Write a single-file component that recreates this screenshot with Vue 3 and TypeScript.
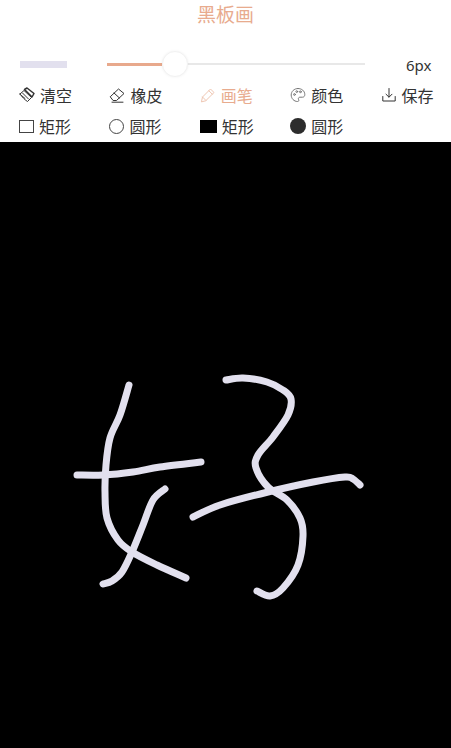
<script setup lang="ts">
type Pt = [number, number]
const lines: Pt[][] = [
  [[129, 385], [120, 415], [110, 438], [106, 465], [105, 492], [107, 518], [118, 540], [132, 552], [157, 565], [186, 578]],
  [[77, 475], [103, 475], [133, 472], [160, 467], [201, 462]],
  [[165, 489], [153, 500], [143, 525], [132, 552], [122, 572], [112, 581], [103, 584]],
  [[226, 380], [243, 378], [267, 382], [283, 390], [291, 399], [288, 415], [273, 437], [258, 455], [256, 468], [268, 487], [287, 500], [300, 518], [303, 536], [298, 565], [283, 588], [270, 596], [257, 591]],
  [[193, 517], [220, 505], [268, 492], [313, 482], [345, 477], [353, 479], [360, 485]]
]
// Catmull-Rom through the sampled points, so the strokes read as hand-drawn curves.
function smooth(p: Pt[]): string {
  let d = `M${p[0][0]} ${p[0][1]}`
  for (let i = 0; i < p.length - 1; i++) {
    const a = p[Math.max(i - 1, 0)]
    const b = p[i]
    const c = p[i + 1]
    const e = p[Math.min(i + 2, p.length - 1)]
    const c1x = b[0] + (c[0] - a[0]) / 6
    const c1y = b[1] + (c[1] - a[1]) / 6
    const c2x = c[0] - (e[0] - b[0]) / 6
    const c2y = c[1] - (e[1] - b[1]) / 6
    d += ` C${c1x.toFixed(1)} ${c1y.toFixed(1)} ${c2x.toFixed(1)} ${c2y.toFixed(1)} ${c[0]} ${c[1]}`
  }
  return d
}
const strokes = lines.map(smooth)
const tools = [
  { label: '清空', icon: 'brush' },
  { label: '橡皮', icon: 'eraser' },
  { label: '画笔', icon: 'pen', active: true },
  { label: '颜色', icon: 'palette' },
  { label: '保存', icon: 'save' }
]
const shapes = [
  { label: '矩形', cls: 'rect-o' },
  { label: '圆形', cls: 'circle-o' },
  { label: '矩形', cls: 'rect-f' },
  { label: '圆形', cls: 'circle-f' }
]
</script>

<template>
  <div class="page">
    <h1 class="title">黑板画</h1>
    <div class="slider-row">
      <div class="preview"></div>
      <div class="slider">
        <div class="fill"></div>
        <div class="track"></div>
        <div class="thumb"></div>
      </div>
      <span class="size">6px</span>
    </div>
    <div class="grid tools">
      <div v-for="t in tools" :key="t.label" class="item" :class="{ active: t.active }">
        <svg class="icon" :class="t.icon" viewBox="0 0 16 16" fill="none" stroke="currentColor" stroke-width="1" stroke-linejoin="round" stroke-linecap="round">
          <template v-if="t.icon === 'brush'">
            <path d="M1 7 L5 3.5 L12.5 10.5 L8.5 14.5 C6 13 3 10 1 7 Z" />
            <path d="M5.5 2.5 L8 1 L15 6.5 L13 10 Z" stroke-width="1.5" />
            <path d="M3.5 6 L9.5 12 M2.5 8.5 L6 11.5" />
          </template>
          <template v-else-if="t.icon === 'eraser'">
            <path d="M1.5 9.5 L9.5 2 L15 6.5 L7.5 13.5 L4.5 13.5 Z" />
            <path d="M5 6 L10.5 11" />
            <path d="M3 15.2 H14" />
          </template>
          <template v-else-if="t.icon === 'pen'">
            <path d="M1.5 14.5 L2.5 10 L10.5 2 L14 5.5 L6 13.5 Z" />
            <path d="M8.8 3.7 L12.3 7.2 M2.5 10 L6 13.5" />
          </template>
          <template v-else-if="t.icon === 'palette'">
            <path d="M8 1.5 C4 1.5 1.2 4.5 1.2 8 C1.2 11.5 4 14.5 7.5 14.5 C9 14.5 9 13.2 8.5 12.3 C8 11.2 8.8 10.2 10 10.2 H12.5 C14 10.2 14.8 9 14.8 7.6 C14.8 4 11.8 1.5 8 1.5 Z" />
            <circle cx="4.5" cy="7.5" r="0.9" />
            <circle cx="6.8" cy="4.6" r="0.9" />
            <circle cx="10.4" cy="4.8" r="0.9" />
          </template>
          <template v-else>
            <path d="M8 1.5 V10 M5 7.2 L8 10.2 L11 7.2" />
            <path d="M1.8 9.5 V14 H14.2 V9.5" />
          </template>
        </svg>
        <span>{{ t.label }}</span>
      </div>
    </div>
    <div class="grid shapes">
      <div v-for="(s, i) in shapes" :key="i" class="item">
        <span class="shape" :class="s.cls"></span>
        <span>{{ s.label }}</span>
      </div>
    </div>
    <svg class="board" viewBox="0 142 451 606" width="451" height="606">
      <path v-for="(d, i) in strokes" :key="i" :d="d" fill="none" stroke="#e2e0ee" stroke-width="7" stroke-linecap="round" stroke-linejoin="round" />
    </svg>
  </div>
</template>

<style scoped>
.page {
  width: 451px;
  height: 748px;
  background: #fff;
  overflow: hidden;
  display: flex;
  flex-direction: column;
  font-family: "Noto Sans CJK SC", "Noto Sans", sans-serif;
  color: #333;
}
.title {
  margin: 0;
  height: 28px;
  line-height: 28px;
  text-align: center;
  font-size: 19px;
  font-weight: 400;
  color: #e8ab8e;
}
.slider-row {
  display: flex;
  align-items: center;
  height: 26px;
  margin-top: 23px;
  padding-left: 20px;
}
.preview {
  width: 47px;
  height: 7px;
  background: #e2e0ee;
}
.slider {
  position: relative;
  width: 258px;
  height: 26px;
  margin-left: 40px;
  display: flex;
  align-items: center;
}
.fill {
  width: 55px;
  height: 3px;
  background: #e8a98c;
}
.track {
  flex: 1;
  height: 2px;
  background: #e8e8e8;
}
.thumb {
  position: absolute;
  left: 55px;
  top: 0;
  width: 26px;
  height: 26px;
  box-sizing: border-box;
  border-radius: 50%;
  background: #fff;
  border: 1px solid #f2f2f2;
  box-shadow: 0 0 3px rgba(0, 0, 0, 0.06);
}
.size {
  margin-left: 41px;
  padding-top: 2px;
  font-size: 15px;
  font-family: "Noto Sans", sans-serif;
}
.grid {
  display: grid;
  grid-template-columns: repeat(5, 90.4px);
  padding-left: 19px;
}
.tools {
  height: 26px;
  margin-top: 5px;
}
.shapes {
  height: 26px;
  margin-top: 6px;
}
.item {
  display: flex;
  align-items: center;
  gap: 5px;
  font-size: 16px;
  white-space: nowrap;
}
.item.active {
  color: #e8ab8e;
}
.icon {
  width: 16px;
  height: 16px;
  flex: none;
}
.icon.palette {
  color: #777;
}
.icon.pen {
  color: #efc6b2;
}
.shape {
  flex: none;
  box-sizing: border-box;
  display: block;
}
.rect-o {
  width: 15px;
  height: 13px;
  border: 1px solid #444;
}
.circle-o {
  width: 15px;
  height: 15px;
  border: 1px solid #444;
  border-radius: 50%;
}
.rect-f {
  width: 17px;
  height: 13px;
  background: #000;
}
.circle-f {
  width: 16px;
  height: 16px;
  border-radius: 50%;
  background: #2c2c2c;
}
.board {
  display: block;
  flex: none;
  margin-top: 3px;
  background: #000;
}
</style>
